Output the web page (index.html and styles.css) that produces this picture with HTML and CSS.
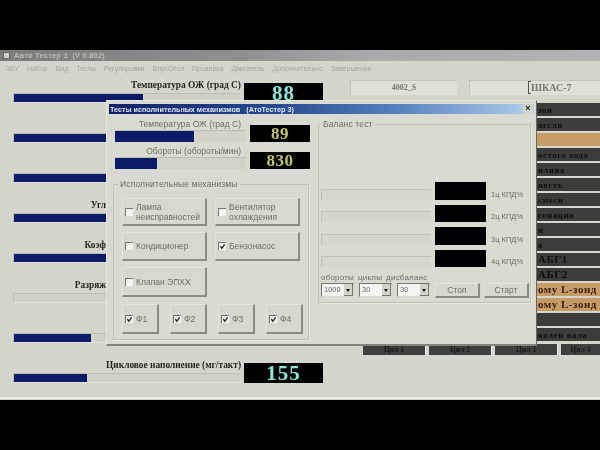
FILE: index.html
```html
<!DOCTYPE html>
<html lang="ru">
<head>
<meta charset="utf-8">
<title>Авто Тестер 3</title>
<link rel="stylesheet" href="styles.css">
</head>
<body>
<div class="screen">
  <div class="titlebar"><span class="appicon"></span><span>Авто Тестер 3&nbsp; (V 0.802)</span></div>
  <div class="menu">
    <span>ЭБУ</span><span>Набор</span><span>Вид</span><span>Тесты</span><span>Регулировки</span><span>ВпусОтсл</span><span>Проверка</span><span>Двигатель</span><span>Дополнительно</span><span>Завершение</span>
  </div>
  <div class="content">
    <div class="gauges">
      <div class="gauge"><div class="gauge-label">Температура ОЖ (град С)</div><div class="track"><div class="fill" style="width:129px"></div></div><div class="value">88</div></div>
      <div class="gauge"><div class="gauge-label"></div><div class="track"><div class="fill" style="width:160px"></div></div><div class="value"></div></div>
      <div class="gauge"><div class="gauge-label"></div><div class="track"><div class="fill" style="width:160px"></div></div><div class="value"></div></div>
      <div class="gauge"><div class="gauge-label gauge-label-cut">Угл</div><div class="track"><div class="fill" style="width:160px"></div></div><div class="value"></div></div>
      <div class="gauge"><div class="gauge-label gauge-label-cut">Коэф</div><div class="track"><div class="fill" style="width:160px"></div></div><div class="value"></div></div>
      <div class="gauge"><div class="gauge-label gauge-label-cut">Разряж</div><div class="track"></div><div class="value"></div></div>
      <div class="gauge"><div class="gauge-label"></div><div class="track"><div class="fill" style="width:77px"></div></div><div class="value"></div></div>
      <div class="gauge"><div class="gauge-label">Цикловое наполнение (мг/такт)</div><div class="track"><div class="fill" style="width:73px"></div></div><div class="value">155</div></div>
    </div>
    <div class="side">
      <div class="fields">
        <div class="field field-a">4002_S</div>
        <div class="field field-b"><span class="caret"></span>ШКАС-7</div>
      </div>
      <div class="status">
        <div class="st">зон</div>
        <div class="st">агсли</div>
        <div class="st st-hot"></div>
        <div class="st">остого хода</div>
        <div class="st">илива</div>
        <div class="st">ность</div>
        <div class="st">смеси</div>
        <div class="st">гонации</div>
        <div class="st">и</div>
        <div class="st">а</div>
        <div class="st st-big">АБГ1</div>
        <div class="st st-big">АБГ2</div>
        <div class="st st-hot st-big">ому L-зонд</div>
        <div class="st st-hot st-big">ому L-зонд</div>
        <div class="st"></div>
        <div class="st">колен вала</div>
      </div>
      <div class="cyls">
        <div class="cyl">Цил 1</div>
        <div class="cyl">Цил 2</div>
        <div class="cyl">Цил 3</div>
        <div class="cyl">Цил 4</div>
      </div>
    </div>
  </div>
  <div class="strip"></div>

  <div class="window">
    <div class="win-title"><span>Тесты исполнительных механизмов&nbsp;&nbsp; (АтоТестер 3)</span><span class="close">×</span></div>
    <div class="win-body">
      <div class="win-left">
        <div class="mini">
          <div class="mini-label">Температура ОЖ (град С)</div>
          <div class="mini-track"><div class="fill" style="width:79px"></div></div>
          <div class="mini-value">89</div>
        </div>
        <div class="mini">
          <div class="mini-label">Обороты (обороты/мин)</div>
          <div class="mini-track"><div class="fill" style="width:42px"></div></div>
          <div class="mini-value">830</div>
        </div>
        <fieldset class="group group-act">
          <legend>Исполнительные механизмы</legend>
          <div class="act-grid">
            <div class="btn r1"><span class="cb"></span><span>Лампа неисправностей</span></div>
            <div class="btn r1"><span class="cb"></span><span>Вентилятор охлаждения</span></div>
            <div class="btn r2"><span class="cb"></span><span>Кондиционер</span></div>
            <div class="btn r2"><span class="cb"><svg viewBox="0 0 8 8" class="tick"><path d="M1.5 3.5 3.3 6 6.5 1.5" /></svg></span><span>Бензонасос</span></div>
            <div class="btn r3"><span class="cb"></span><span>Клапан ЭПХХ</span></div>
          </div>
          <div class="phase-row">
            <div class="btn"><span class="cb"><svg viewBox="0 0 8 8" class="tick"><path d="M1.5 3.5 3.3 6 6.5 1.5" /></svg></span><span>Ф1</span></div>
            <div class="btn"><span class="cb"><svg viewBox="0 0 8 8" class="tick"><path d="M1.5 3.5 3.3 6 6.5 1.5" /></svg></span><span>Ф2</span></div>
            <div class="btn"><span class="cb"><svg viewBox="0 0 8 8" class="tick"><path d="M1.5 3.5 3.3 6 6.5 1.5" /></svg></span><span>Ф3</span></div>
            <div class="btn"><span class="cb"><svg viewBox="0 0 8 8" class="tick"><path d="M1.5 3.5 3.3 6 6.5 1.5" /></svg></span><span>Ф4</span></div>
          </div>
        </fieldset>
      </div>
      <fieldset class="group group-bal">
        <legend>Баланс тест</legend>
        <div class="bal-rows">
          <div class="bal"><div class="bal-track"></div><div class="bal-box"></div><div class="bal-label">1ц КПД%</div></div>
          <div class="bal"><div class="bal-track"></div><div class="bal-box"></div><div class="bal-label">2ц КПД%</div></div>
          <div class="bal"><div class="bal-track"></div><div class="bal-box"></div><div class="bal-label">3ц КПД%</div></div>
          <div class="bal"><div class="bal-track"></div><div class="bal-box"></div><div class="bal-label">4ц КПД%</div></div>
        </div>
        <div class="ctl-labels"><span>обороты</span><span>циклы</span><span>дисбаланс</span></div>
        <div class="ctl-row">
          <div class="combo"><span>1000</span><span class="arrow"></span></div>
          <div class="combo"><span>30</span><span class="arrow"></span></div>
          <div class="combo"><span>30</span><span class="arrow"></span></div>
          <div class="btn btn-push">Стоп</div>
          <div class="btn btn-push">Старт</div>
        </div>
      </fieldset>
    </div>
  </div>
</div>
</body>
</html>
```

FILE: styles.css
```css
* { box-sizing: border-box; }
html, body { margin: 0; padding: 0; background: #000; }
.screen {
  position: relative;
  width: 600px;
  height: 450px;
  padding-top: 50px;
  overflow: hidden;
  background: #000;
  font-family: "Liberation Sans", sans-serif;
  filter: blur(0.6px);
}
.titlebar {
  height: 11px;
  display: flex;
  align-items: center;
  gap: 4px;
  padding-left: 3px;
  background: linear-gradient(90deg, #7c7c7a 0%, #8f8f8d 40%, #a9a9a7 60%, #b3b3b1 100%);
  color: #bdbdb6;
  font-size: 7.4px;
  font-weight: bold;
  letter-spacing: .25px;
}
.appicon { width: 7px; height: 7px; background: #cfcfc8; border: 1px solid #666; }
.menu {
  height: 14px;
  display: flex;
  align-items: center;
  gap: 8px;
  padding-left: 5px;
  background: #d4d5cc;
  color: #a6a69e;
  font-size: 7px;
}
.content {
  height: 325px;
  display: flex;
  background: #d4d5cc;
}
.gauges {
  width: 330px;
  padding: 5px 0 0 13px;
  flex: none;
}
.gauge {
  height: 40px;
  display: grid;
  grid-template-columns: 228px 79px;
  grid-template-rows: 13px 10px;
  column-gap: 3px;
}
.gauge-label {
  text-align: right;
  white-space: nowrap;
  font-family: "Liberation Serif", serif;
  font-weight: bold;
  font-size: 9.4px;
  line-height: 11px;
  color: #26261f;
}
.gauge-label-cut { padding-right: 135px; }
.track {
  grid-column: 1;
  grid-row: 2;
  height: 10px;
  background: #d0d1c8;
  border-top: 1px solid #bcbdb4;
  border-left: 1px solid #bcbdb4;
  border-bottom: 1px solid #e2e3db;
  overflow: hidden;
}
.fill {
  height: 100%;
  background: #0c1b68;
}
.value {
  grid-column: 2;
  grid-row: 1 / span 2;
  margin-top: 3px;
  height: 20px;
  background: #000;
  color: #8be6da;
  font-family: "Liberation Serif", serif;
  font-weight: bold;
  font-size: 21px;
  line-height: 20px;
  letter-spacing: 1px;
  text-align: center;
}
.side {
  flex: 1;
  padding-top: 5px;
  margin-left: 20px;
  min-width: 0;
}
.fields {
  display: flex;
  gap: 12px;
  height: 15px;
}
.field {
  height: 15px;
  background: #dfe0d8;
  border-top: 1px solid #c2c3ba;
  border-left: 1px solid #c2c3ba;
  font-family: "Liberation Serif", serif;
  font-weight: bold;
  font-size: 8px;
  line-height: 14px;
  color: #77776f;
  white-space: nowrap;
}
.field-a { width: 107px; text-align: center; }
.field-b { width: 131px; padding-left: 61px; position: relative; font-size: 10px; }
.caret {
  position: absolute;
  left: 58px;
  top: 0;
  width: 3px;
  height: 13px;
  border: 1px solid #55554f;
  border-right: 0;
}
.status {
  margin-top: 8px;
  margin-left: 187px;
  display: flex;
  flex-direction: column;
  gap: 2px;
}
.st {
  height: 13px;
  background: #3c3c3a;
  padding-left: 1px;
  color: #0d0d0c;
  font-family: "Liberation Serif", serif;
  font-weight: bold;
  font-size: 8.5px;
  line-height: 14px;
  letter-spacing: .7px;
  white-space: nowrap;
  overflow: hidden;
}
.st-hot { background: #c69b66; color: #3b1d05; }
.st-big { font-size: 11px; line-height: 13px; letter-spacing: .5px; }
.cyls {
  display: flex;
  gap: 3px;
  margin-top: 3px;
  margin-left: 13px;
  width: 237px;
}
.cyl {
  flex: none;
  width: 63px;
  height: 11px;
  background: #3f3f3d;
  border-right: 1px solid #eee;
  color: #1a1a18;
  font-family: "Liberation Serif", serif;
  font-weight: bold;
  font-size: 7.5px;
  line-height: 11px;
  text-align: center;
}
.cyl:last-child { width: 39px; border-right: 0; }
.strip {
  height: 2px;
  margin-top: -3px;
  position: relative;
  background: #efefe8;
}

/* floating dialog */
.window {
  position: absolute;
  left: 106px;
  top: 100px;
  width: 431px;
  height: 246px;
  background: #d9dad2;
  padding: 3px 2px 0 2px;
  border-top: 1px solid #e8e8e2;
  border-left: 1px solid #e8e8e2;
  border-right: 1px solid #66665f;
  border-bottom: 2px solid #84847c;
  color: #6e6e67;
  font-size: 8.5px;
}
.win-title {
  height: 10px;
  display: flex;
  justify-content: space-between;
  align-items: center;
  padding-left: 1px;
  background: linear-gradient(90deg, #0e2168 0%, #274b92 40%, #5b86c0 70%, #b2d0ec 100%);
  color: #e4e8f2;
  font-size: 7.2px;
  font-weight: bold;
  white-space: nowrap;
}
.close {
  width: 10px;
  height: 10px;
  background: #d2d3cb;
  color: #222;
  font-size: 9px;
  line-height: 9px;
  text-align: center;
  margin-right: 1px;
}
.win-body {
  display: flex;
  gap: 9px;
  padding: 5px 0 0 4px;
}
.win-left { width: 196px; flex: none; }
.mini {
  display: grid;
  width: 197px;
  margin-left: 2px;
  grid-template-columns: 131px 60px;
  grid-template-rows: 11px 12px;
  column-gap: 4px;
  margin-bottom: 4px;
}
.mini-label {
  grid-column: 1;
  grid-row: 1;
  text-align: right;
  white-space: nowrap;
  font-size: 8.5px;
  line-height: 10px;
  padding-right: 5px;
}
.mini-track {
  grid-column: 1;
  grid-row: 2;
  background: #d2d3ca;
  border-top: 1px solid #bcbdb4;
  overflow: hidden;
}
.mini-value {
  grid-column: 2;
  grid-row: 1 / span 2;
  align-self: end;
  height: 17px;
  background: #000;
  color: #c5c46a;
  font-family: "Liberation Serif", serif;
  font-weight: bold;
  font-size: 17px;
  line-height: 17px;
  text-align: center;
  letter-spacing: .5px;
}
.group {
  margin: 0;
  padding: 0;
  min-width: 0;
  border: 1px solid #c1c2b9;
  box-shadow: 1px 1px 0 #e6e7df;
}
.group legend {
  padding: 0 2px;
  font-size: 8.5px;
  line-height: 11px;
  letter-spacing: .15px;
}
.group-act {
  margin-top: 10px;
  height: 161px;
  padding: 8px 0 0 8px;
}
.group-act legend { margin-left: -4px; }
.act-grid {
  display: grid;
  grid-template-columns: 85px 85px;
  column-gap: 8px;
  row-gap: 6px;
}
.btn {
  display: flex;
  align-items: center;
  gap: 3px;
  padding-left: 2px;
  background: #d7d8d0;
  border-top: 1px solid #e3e4dc;
  border-left: 1px solid #e3e4dc;
  border-right: 2px solid #8c8c84;
  border-bottom: 2px solid #8c8c84;
  line-height: 10px;
}
.r1 { height: 28px; }
.r2 { height: 29px; }
.r3 { height: 30px; }
.cb {
  flex: none;
  width: 8px;
  height: 8px;
  background: #f4f4ef;
  border-top: 1px solid #77776f;
  border-left: 1px solid #77776f;
}
.tick { display: block; width: 7px; height: 7px; fill: none; stroke: #2b2b28; stroke-width: 1.5; }
.phase-row {
  display: grid;
  grid-template-columns: repeat(4, 37px);
  column-gap: 11px;
  margin-top: 7px;
  height: 30px;
}
.group-bal {
  width: 213px;
  height: 184px;
  padding: 52px 0 0 2px;
}
.group-bal legend { margin-left: 0; }
.bal-rows { display: flex; flex-direction: column; gap: 5px; }
.bal {
  display: grid;
  grid-template-columns: 110px 51px auto;
  column-gap: 4px;
  height: 17.5px;
  align-items: end;
}
.bal-track {
  height: 11px;
  border-top: 1px solid #c0c1b8;
  border-left: 1px solid #c0c1b8;
  background: #d5d6ce;
}
.bal-box { height: 17.5px; background: #000; }
.bal-label { font-size: 7.5px; line-height: 11px; padding-left: 1px; white-space: nowrap; }
.ctl-labels {
  display: flex;
  gap: 4px;
  margin-top: 5px;
  font-size: 8px;
  line-height: 11px;
  height: 11px;
  letter-spacing: .2px;
}
.ctl-row {
  display: flex;
  gap: 5px;
  height: 15px;
}
.combo {
  width: 33px;
  height: 14px;
  display: flex;
  justify-content: space-between;
  align-items: stretch;
  padding-left: 2px;
  background: #f5f5f0;
  border-top: 1px solid #77776f;
  border-left: 1px solid #77776f;
  border-right: 1px solid #d8d8d0;
  border-bottom: 1px solid #d8d8d0;
  font-size: 7.5px;
  line-height: 12px;
}
.arrow {
  position: relative;
  width: 9px;
  background: #d2d3cb;
  border-right: 1px solid #77776f;
  border-bottom: 1px solid #77776f;
}
.arrow::after {
  content: "";
  position: absolute;
  left: 2px;
  top: 5px;
  border: 2px solid transparent;
  border-top: 3px solid #111;
}
.btn-push {
  width: 45px;
  height: 15px;
  justify-content: center;
  padding-left: 0;
  font-size: 8.5px;
}
.btn-push + .btn-push { margin-left: -1px; }
```
